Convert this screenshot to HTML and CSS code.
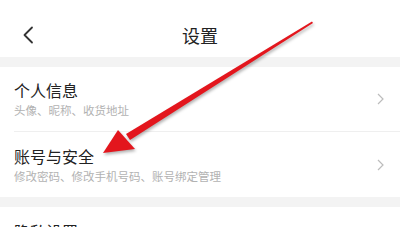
FILE: index.html
```html
<!DOCTYPE html>
<html lang="zh-CN">
<head>
    <meta charset="UTF-8">
    <meta name="viewport" content="width=device-width, initial-scale=1.0">
    <title>设置</title>
    <link rel="stylesheet" href="styles.css">
</head>
<body>
    <div class="page">
        <div class="header">
            <svg class="back" width="12" height="18" viewBox="0 0 12 18">
                <path d="M10 1.5 L2.5 9 L10 16.5" fill="none" stroke="#333" stroke-width="1.8" stroke-linecap="round" stroke-linejoin="round"/>
            </svg>
            <div class="header-title">设置</div>
        </div>

        <div class="gap"></div>

        <div class="group">
            <div class="row">
                <div class="row-text">
                    <div class="row-title">个人信息</div>
                    <div class="row-sub">头像、昵称、收货地址</div>
                </div>
                <svg class="chev" width="7" height="12" viewBox="0 0 7 12">
                    <path d="M1 1 L6 6 L1 11" fill="none" stroke="#bcbcbc" stroke-width="1.2"/>
                </svg>
            </div>
            <div class="row">
                <div class="row-text">
                    <div class="row-title">账号与安全</div>
                    <div class="row-sub">修改密码、修改手机号码、账号绑定管理</div>
                </div>
                <svg class="chev" width="7" height="12" viewBox="0 0 7 12">
                    <path d="M1 1 L6 6 L1 11" fill="none" stroke="#bcbcbc" stroke-width="1.2"/>
                </svg>
            </div>
        </div>

        <div class="gap"></div>

        <div class="group">
            <div class="row row-top">
                <div class="row-text">
                    <div class="row-title">隐私设置</div>
                </div>
            </div>
        </div>

        <!-- annotation arrow drawn over the screenshot -->
        <svg class="arrow" width="400" height="227" viewBox="0 0 400 227">
            <polygon fill="#e3161d" points="312,21.5 313,23 130,140 126,134"/>
            <polygon fill="#e3161d" points="103,153 118,130 135,149"/>
        </svg>
    </div>
</body>
</html>
```

FILE: styles.css
```css
body {
    margin: 0;
    font-family: "Noto Sans CJK SC", "Noto Sans", sans-serif;
    background: #fff;
    color: #222;
}

.page {
    position: relative;
    width: 400px;
    height: 227px;
    overflow: hidden;
}

.header {
    height: 57px;
    display: flex;
    align-items: flex-start;
    justify-content: center;
    padding-top: 23px;
    box-sizing: border-box;
    position: relative;
}

.back {
    position: absolute;
    left: 22px;
    top: 26px;
}

.header-title {
    font-size: 18px;
    line-height: 24px;
    color: #222;
}

.gap {
    height: 10px;
    background: #f3f3f3;
}

.row {
    height: 65px;
    display: flex;
    align-items: center;
    margin-left: 14px;
    padding-right: 16px;
    border-bottom: 1px solid #efefef;
    box-sizing: border-box;
}

.row:last-child {
    border-bottom: none;
}

.row-text {
    flex: 1;
}

.row-title {
    font-size: 16px;
    line-height: 20px;
    color: #222;
}

.row-sub {
    font-size: 11.5px;
    line-height: 15px;
    margin-top: 3px;
    color: #b2b2b2;
}

.row-top {
    align-items: flex-start;
    padding-top: 14px;
}

.arrow {
    position: absolute;
    left: 0;
    top: 0;
    filter: drop-shadow(1px 2px 1.5px rgba(0, 0, 0, 0.3));
}
```
